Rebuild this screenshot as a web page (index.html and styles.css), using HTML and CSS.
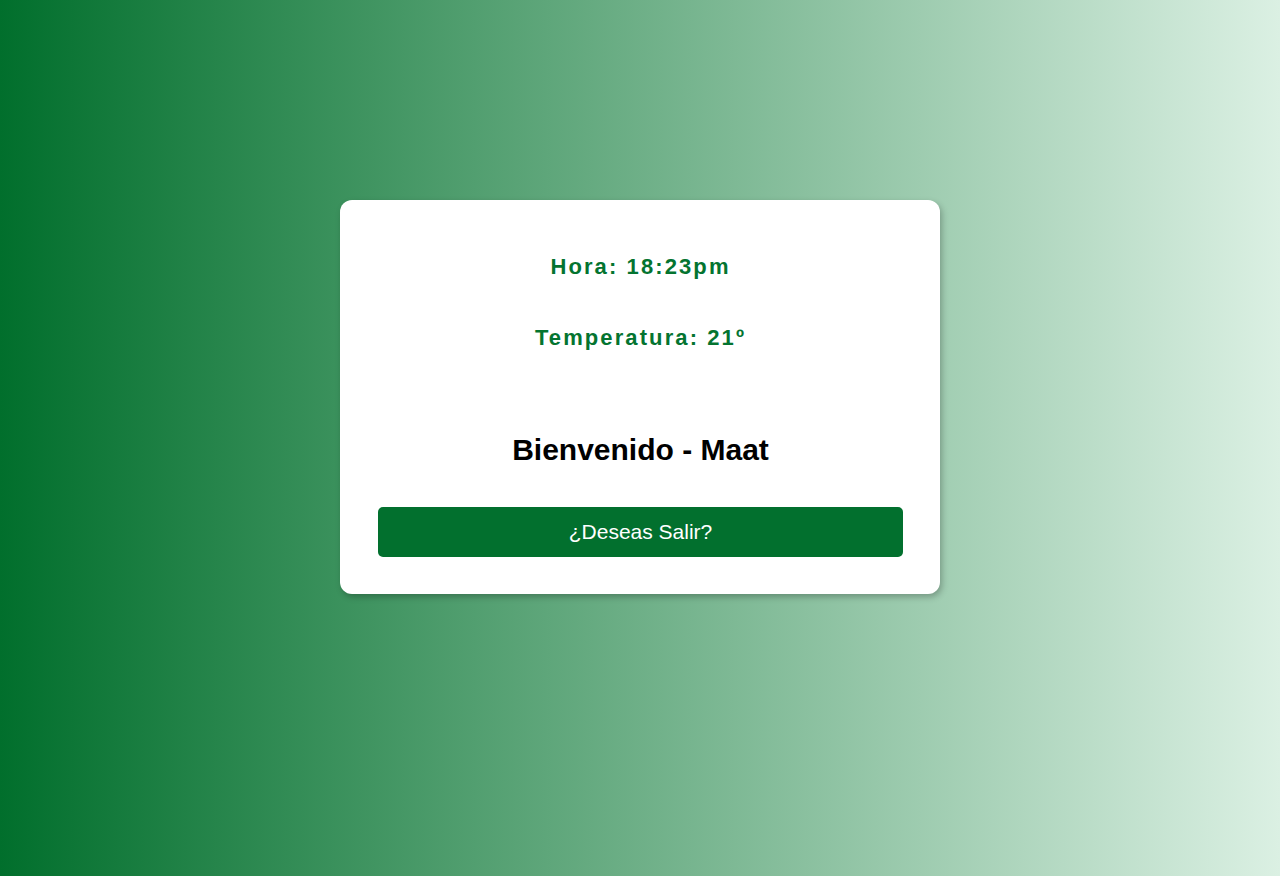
FILE: index.html
```html
<!DOCTYPE html>
<html lang="es">
<head>
<meta charset="utf-8">
<title>Bienvenido</title>
<link rel="stylesheet" href="styles.css">
</head>
<body>
<main class="page">
  <section class="card">
    <p class="info">Hora: 18:23pm</p>
    <p class="info">Temperatura: 21º</p>
    <h1 class="welcome">Bienvenido - Maat</h1>
    <button class="exit" type="button">¿Deseas Salir?</button>
  </section>
</main>
</body>
</html>
```
FILE: styles.css
```css
html, body {
  margin: 0;
  padding: 0;
  height: 100%;
}
body {
  font-family: "Liberation Sans", Arial, sans-serif;
  background: linear-gradient(to right, #016f2c 0%, #dbf0e3 100%);
}
.page {
  display: flex;
  justify-content: center;
  padding-top: 200px;
}
.card {
  width: 600px;
  box-sizing: border-box;
  background: #fff;
  border-radius: 12px;
  box-shadow: 2px 3px 6px rgba(0, 0, 0, 0.25);
  padding: 50px 37px 37px 38px;
  display: flex;
  flex-direction: column;
  align-items: stretch;
}
.info {
  margin: 0;
  text-align: center;
  color: #047430;
  font-weight: bold;
  font-size: 22px;
  letter-spacing: 2.1px;
  line-height: 34px;
}
.info + .info {
  margin-top: 37px;
}
.welcome {
  margin: 75px 0 0;
  text-align: center;
  color: #000;
  font-size: 30px;
  font-weight: bold;
  line-height: 40px;
}
.exit {
  margin-top: 37px;
  height: 50px;
  border: none;
  border-radius: 5px;
  background: #02702e;
  color: #fff;
  font-family: "Liberation Sans", Arial, sans-serif;
  font-size: 21px;
  cursor: pointer;
}
```
